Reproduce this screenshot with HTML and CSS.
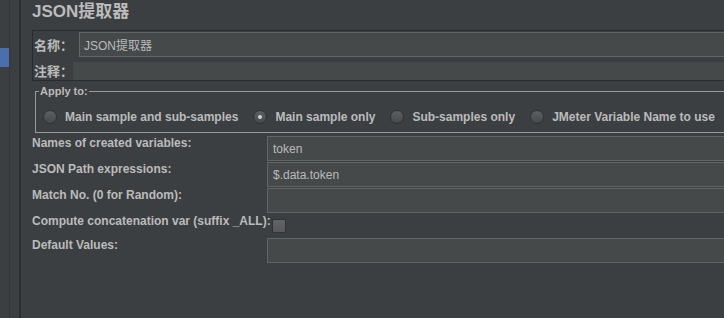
FILE: index.html
```html
<!DOCTYPE html>
<html lang="zh">

<head>
    <meta charset="UTF-8">
    <meta name="viewport" content="width=device-width, initial-scale=1.0">
    <title>JSON提取器</title>
    <link rel="stylesheet" href="styles.css">
</head>

<body>
    <div class="page">
        <!-- Arbre de gauche (replié) -->
        <div class="tree">
            <div class="tree-pane">
                <div class="tree-selected"></div>
            </div>
            <div class="tree-gap"></div>
        </div>

        <!-- Éditeur de l'extracteur -->
        <div class="editor">
            <h1 class="title">JSON提取器</h1>

            <div class="name-panel">
                <div class="name-row">
                    <label class="name-label">名称：</label>
                    <div class="field name-field">JSON提取器</div>
                </div>
                <div class="name-row comment-row">
                    <label class="name-label comment-label">注释：</label>
                    <div class="field comment-field"></div>
                </div>
            </div>

            <fieldset class="apply-to">
                <legend>Apply to:</legend>
                <div class="radio-row">
                    <span class="radio-item"><span class="radio"></span>Main sample and sub-samples</span>
                    <span class="radio-item"><span class="radio checked"></span>Main sample only</span>
                    <span class="radio-item"><span class="radio"></span>Sub-samples only</span>
                    <span class="radio-item"><span class="radio"></span>JMeter Variable Name to use</span>
                    <span class="field var-field"></span>
                </div>
            </fieldset>

            <div class="form">
                <div class="form-row">
                    <span class="form-label">Names of created variables:</span>
                    <div class="field">token</div>
                </div>
                <div class="form-row">
                    <span class="form-label">JSON Path expressions:</span>
                    <div class="field">$.data.token</div>
                </div>
                <div class="form-row">
                    <span class="form-label">Match No. (0 for Random):</span>
                    <div class="field"></div>
                </div>
                <div class="form-row check-row">
                    <span class="form-label">Compute concatenation var (suffix _ALL):</span>
                    <span class="checkbox"></span>
                </div>
                <div class="form-row">
                    <span class="form-label">Default Values:</span>
                    <div class="field"></div>
                </div>
            </div>
        </div>
    </div>
</body>

</html>
```

FILE: styles.css
```css
/* Base */
* {
    box-sizing: border-box;
}

html,
body {
    margin: 0;
    padding: 0;
    overflow: hidden;
    background-color: #3c3f41;
}

body {
    font-family: "Liberation Sans", Arial, "Noto Sans CJK SC", sans-serif;
    font-size: 12px;
    color: #bbbbbb;
}

.page {
    display: flex;
    width: 800px;
    height: 318px;
}

/* Arbre de gauche */
.tree {
    display: flex;
    flex: none;
    width: 21px;
}

.tree-pane {
    width: 10px;
    padding-top: 48px;
    border-right: 1px solid #343638;
}

.tree-selected {
    height: 19px;
    background-color: #4b6eaf;
}

.tree-gap {
    width: 11px;
    border-right: 2px solid #2b2d2e;
}

/* Éditeur */
.editor {
    flex: 1;
    padding-left: 11px;
}

.title {
    margin: 0 0 6px;
    height: 24px;
    font-size: 17px;
    line-height: 24px;
    font-weight: bold;
    white-space: nowrap;
}

/* Nom et commentaire */
.name-panel {
    display: flex;
    flex-direction: column;
    gap: 5px;
    padding-top: 1px;
    border: 1px solid #2b2b2b;
    border-right: none;
}

.name-row {
    display: flex;
    align-items: center;
    height: 25px;
}

.comment-row {
    height: 18px;
}

.name-label {
    flex: none;
    width: 46px;
    padding-left: 1px;
    font-family: "Noto Sans CJK SC", sans-serif;
    font-size: 13px;
    font-weight: bold;
    line-height: 18px;
}

.comment-label {
    width: 40px;
}

/* Champs de saisie */
.field {
    display: flex;
    align-items: center;
    flex: 1;
    height: 25px;
    padding-left: 5px;
    background-color: #45494a;
    border: 1px solid #646464;
    white-space: nowrap;
}

.name-field {
    padding-left: 4px;
}

.comment-field {
    height: 18px;
    border: none;
}

/* Groupe "Apply to" */
.apply-to {
    margin: 3px 0 0 3px;
    padding: 6px 0 3px 3px;
    min-width: 0;
    border: 1px solid #999999;
    border-right: none;
}

.apply-to legend {
    padding: 0 1px;
    font-size: 11px;
    font-weight: bold;
    line-height: 14px;
}

.radio-row {
    display: flex;
    align-items: center;
    height: 25px;
    padding-left: 4px;
    font-weight: bold;
    white-space: nowrap;
}

.radio-item {
    display: flex;
    align-items: center;
    gap: 8px;
    margin-right: 15px;
}

.radio {
    position: relative;
    width: 14px;
    height: 14px;
    border-radius: 50%;
    border: 1px solid #2f3133;
    background: linear-gradient(#5d6062, #46484a);
}

.radio.checked::after {
    content: "";
    position: absolute;
    left: 4px;
    top: 4px;
    width: 4px;
    height: 4px;
    border-radius: 50%;
    background-color: #d2d2d2;
}

.var-field {
    flex: none;
    width: 80px;
    margin-left: -5px;
}

/* Formulaire */
.form {
    display: flex;
    flex-direction: column;
    gap: 1px;
    margin-top: 3px;
}

.form-row {
    display: flex;
    height: 25px;
}

.form-label {
    flex: none;
    width: 235px;
    font-weight: bold;
    line-height: 15px;
    padding-top: 0;
    white-space: nowrap;
}

.check-row {
    height: 23px;
}

.checkbox {
    align-self: center;
    width: 14px;
    height: 14px;
    margin-left: 5px;
    border-radius: 2px;
    border: 1px solid #2f3133;
    background: linear-gradient(#626466, #55575a);
}
```
